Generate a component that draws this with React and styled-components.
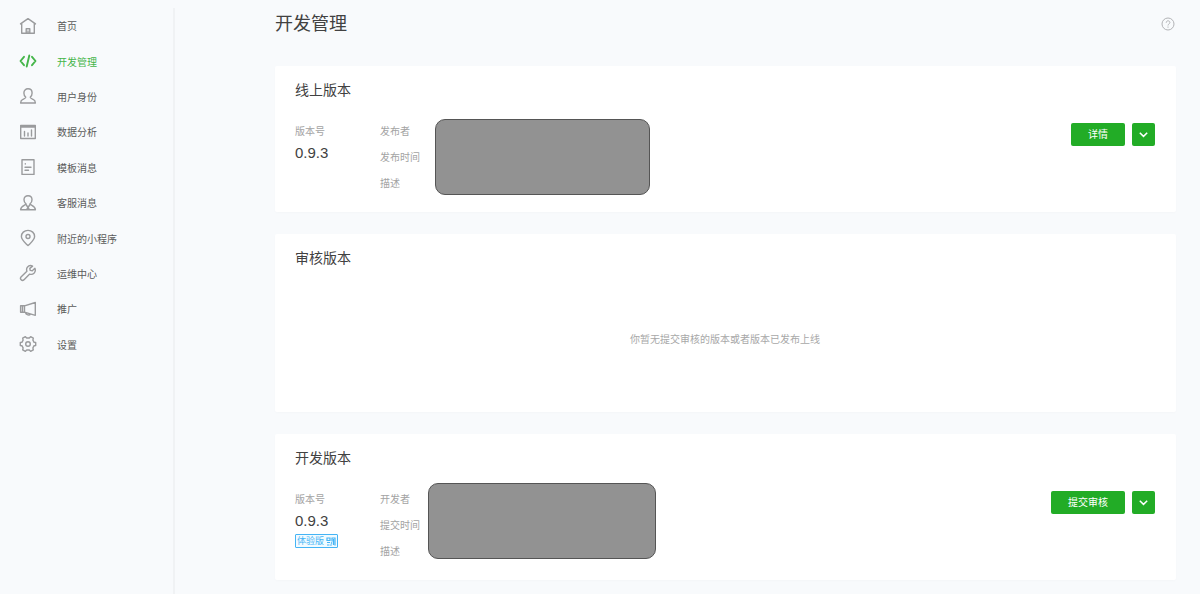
import React from "react"
import styled, { createGlobalStyle, css } from "styled-components"

const GlobalStyle = createGlobalStyle`
  * {
    box-sizing: border-box;
  }
  body {
    margin: 0;
    background: #f8fafc;
    color: #414141;
    font-family: "Liberation Sans", "Noto Sans CJK SC", sans-serif;
    font-size: 10px;
  }
  h1, h2, p, ul {
    margin: 0;
    padding: 0;
    font-weight: 400;
  }
`

const Page = styled.div`
  display: flex;
  min-height: 100vh;
`

const Sidebar = styled.nav`
  display: flex;
  flex: none;
  width: 175px;
  padding-top: 8px;
`

const Menu = styled.ul`
  display: grid;
  grid-template-rows: repeat(10, 1fr);
  flex: 1;
  height: 354px;
  list-style: none;
`

const Divider = styled.div`
  width: 2px;
  background: #f0f2f4;
`

const MenuLink = styled.a`
  display: flex;
  align-items: center;
  gap: 20px;
  height: 100%;
  padding-left: 19px;
  color: ${props => (props.$active ? "#44b549" : "#5a5a5a")};
  text-decoration: none;
  svg {
    flex: none;
    color: ${props => (props.$active ? "#44b549" : "#9a9b9d")};
  }
`

const Main = styled.main`
  flex: 1;
  min-width: 0;
  padding: 9px 24px 14px 100px;
`

const Header = styled.header`
  display: flex;
  align-items: center;
  justify-content: space-between;
  height: 30px;
  margin-bottom: 27px;
`

const Title = styled.h1`
  font-size: 18px;
  line-height: 30px;
`

const iconButton = css`
  display: flex;
  align-items: center;
  justify-content: center;
  padding: 0;
  border: 0;
  cursor: pointer;
`

const Help = styled.button`
  ${iconButton};
  width: 16px;
  height: 16px;
  background: none;
  color: #b2b3b6;
`

const Cards = styled.div`
  display: grid;
  gap: 22px;
`

const Card = styled.section`
  display: flex;
  flex-direction: column;
  min-height: ${props => (props.$tall ? 178 : 146)}px;
  padding: 13px 21px 15px 20px;
  border-radius: 2px;
  background: #fff;
  box-shadow: 0 1px 3px rgba(0, 0, 0, 0.02);
`

const CardTitle = styled.h2`
  margin-bottom: 14px;
  font-size: 14px;
  line-height: 22px;
`

const Body = styled.div`
  display: flex;
  align-items: flex-start;
`

const Version = styled.div`
  width: 85px;
  padding-top: 4px;
`

const Label = styled.p`
  color: #a3a3a3;
  line-height: 26px;
`

const Number = styled.p`
  font-size: 15px;
  line-height: 15px;
`

const Tag = styled.a`
  display: inline-flex;
  align-items: center;
  gap: 2px;
  height: 14px;
  margin-top: 6px;
  padding: 0 1px;
  border: 1px solid #45b4f5;
  border-radius: 1px;
  background: #f2fbff;
  color: #45b4f5;
  font-size: 9px;
  line-height: 12px;
  text-decoration: none;
`

const Details = styled.div`
  padding-top: 4px;
`

// covers private values
const Mask = styled.div`
  width: ${props => props.$width}px;
  height: 76px;
  margin-top: ${props => props.$top}px;
  margin-left: ${props => props.$left}px;
  border: 1px solid #555;
  border-radius: 10px;
  background: #929292;
`

const Actions = styled.div`
  display: flex;
  gap: 7px;
  margin-left: auto;
  padding-top: 8px;
`

const Button = styled.button`
  height: 23px;
  padding: 0 17px;
  border: 0;
  border-radius: 2px;
  background: #22ac26;
  color: #fff;
  font: inherit;
  line-height: 23px;
  cursor: pointer;
`

const More = styled.button`
  ${iconButton};
  width: 23px;
  height: 23px;
  border-radius: 2px;
  background: #22ac26;
  color: #fff;
`

const Empty = styled.p`
  margin: auto;
  color: #a8a8a8;
  line-height: 16px;
`

const Icon = ({ children, width = 1.4 }) => (
  <svg
    width="18"
    height="18"
    viewBox="0 0 18 18"
    fill="none"
    stroke="currentColor"
    strokeWidth={width}
    strokeLinejoin="round"
    strokeLinecap="round"
    aria-hidden="true"
  >
    {children}
  </svg>
)

const HomeIcon = () => (
  <Icon>
    <path d="M1.500 6.900 9 1.600l7.500 5.300M2.700 6.300v10h12.600v-10M7.200 16.300v-4.500h3.600v4.500M9 14v2" />
  </Icon>
)

const CodeIcon = () => (
  <Icon width={1.9}>
    <path d="M5 4.800 1.500 9 5 13.200M13 4.800 16.500 9 13 13.200M10.300 3.500 7.700 14.500" />
  </Icon>
)

const UserIcon = () => (
  <Icon>
    <path d="M6.800 10.200C5.500 9.200 4.900 7.600 4.900 5.900 4.900 3.400 6.600 1.800 9 1.800s4.100 1.600 4.100 4.100c0 1.700-.6 3.300-1.900 4.300.3 1.300 1.400 1.500 2.900 2.100 1.600.6 2.200 1.800 2.300 3.700H1.600c.1-1.900.7-3.100 2.300-3.700 1.500-.6 2.600-.8 2.900-2.100Z" />
  </Icon>
)

const ChartIcon = () => (
  <Icon>
    <path d="M1.700 2.500h14.600v13H1.700zM1.700 4h14.600M5.500 8.500V13M9 10v3M12.500 7v6" />
  </Icon>
)

const TemplateIcon = () => (
  <Icon>
    <path d="M3 1.800h12v14.600H3zM6.300 5.700v.3M6 9.200h6M6 12.200h3.500" />
  </Icon>
)

const ServiceIcon = () => (
  <Icon>
    <path d="M7 9.900C5.600 8.800 5 7.400 5 5.700 5 3.300 6.700 1.700 9 1.700s4 1.600 4 4c0 1.700-.6 3.100-2 4.200.8 1.600 5.200 1.900 5.400 5.900H1.600c.2-4 4.600-4.300 5.400-5.900ZM7 10.500l2 3 2-3M9 13.500l-1.500 2.300M9 13.500l1.500 2.300" />
  </Icon>
)

const PinIcon = () => (
  <Icon>
    <path d="M9 16.600C5.300 13 2.400 10.800 2.400 7.500 2.400 4 5.200 1.400 9 1.400s6.600 2.600 6.600 6.100c0 3.300-2.900 5.500-6.600 9.100Z" />
    <circle cx="9" cy="7.500" r="2" />
  </Icon>
)

const WrenchIcon = () => (
  <Icon>
    <path d="M13.600 2.100c-1.900-.9-4-.4-5.200 1.100-.9 1.200-1 2.600-.5 4L2 13c-1.600 1.800 1 4.400 2.800 2.900l5.900-5.800c1.500.5 3.100.2 4.300-.9 1.300-1.300 1.600-3.200.9-4.900l-2.600 2.400-2.100-.3-.4-2Z" />
  </Icon>
)

const HornIcon = () => (
  <Icon>
    <path d="M5.500 5.800 16.300 2.500v12.800L5.500 12.200ZM5.500 5.800H1.600v6.400h3.900M3.500 6v6M6.500 12.700c.3 2.300 4.100 3 4.800 1.400" />
  </Icon>
)

const GearIcon = () => (
  <Icon>
    <path d="m6.400 1.700 1.300 1.300h2.600l1.300-1.300 2.700 1.500-.4 1.900 1.200 2.200 1.600.2v3l-1.600.2-1.200 2.200.4 1.900-2.700 1.500-1.300-1.300H7.700l-1.300 1.300-2.700-1.500.4-1.900-1.200-2.200-1.600-.2v-3l1.600-.2 1.200-2.200-.4-1.900Z" />
    <circle cx="9" cy="9" r="2.300" />
  </Icon>
)

const HelpIcon = () => (
  <svg width="14" height="14" viewBox="0 0 14 14" fill="none" stroke="currentColor" aria-hidden="true">
    <circle cx="7" cy="7" r="6" />
    <path d="M5.200 5.700c0-2.500 3.700-2.400 3.700-.2C8.900 6.900 7 6.900 7 8.500M7 9.500v1.200" />
  </svg>
)

const ChevronIcon = () => (
  <svg width="11" height="11" viewBox="0 0 11 11" fill="none" stroke="currentColor" strokeWidth="1.500" aria-hidden="true">
    <path d="m1.800 3.700 3.700 3.700 3.700-3.700" />
  </svg>
)

const CodeMark = () => (
  <svg width="10" height="9" viewBox="0 0 10 9" fill="none" stroke="currentColor" strokeWidth="1.200" aria-hidden="true">
    <path d="M1 1h3v2.500H1zM1 5.500h3M1 8h2.500M6 1v3.500M5.500 1H9v7.500M7.500 2v6M5 6.500l1-1M4.500 8.500l1-1" />
  </svg>
)

const menu = [
  { text: "首页", icon: HomeIcon },
  { text: "开发管理", icon: CodeIcon, active: true },
  { text: "用户身份", icon: UserIcon },
  { text: "数据分析", icon: ChartIcon },
  { text: "模板消息", icon: TemplateIcon },
  { text: "客服消息", icon: ServiceIcon },
  { text: "附近的小程序", icon: PinIcon },
  { text: "运维中心", icon: WrenchIcon },
  { text: "推广", icon: HornIcon },
  { text: "设置", icon: GearIcon },
]

const VersionCard = ({ title, labels, mask, action, trial }) => (
  <Card>
    <CardTitle>{title}</CardTitle>
    <Body>
      <Version>
        <Label>版本号</Label>
        <Number>0.9.3</Number>
        {trial && (
          <Tag href="#trial">
            体验版
            <CodeMark />
          </Tag>
        )}
      </Version>
      <Details>
        {labels.map(label => (
          <Label key={label}>{label}</Label>
        ))}
      </Details>
      <Mask $width={mask.width} $top={mask.top} $left={mask.left} />
      <Actions>
        <Button type="button">{action}</Button>
        <More type="button" aria-label="更多">
          <ChevronIcon />
        </More>
      </Actions>
    </Body>
  </Card>
)

export default function App() {
  return (
    <>
      <GlobalStyle />
      <Page>
        <Sidebar>
          <Menu>
            {menu.map(({ text, icon: ItemIcon, active }) => (
              <li key={text}>
                <MenuLink href="#menu" $active={active}>
                  <ItemIcon />
                  {text}
                </MenuLink>
              </li>
            ))}
          </Menu>
          <Divider />
        </Sidebar>
        <Main>
          <Header>
            <Title>开发管理</Title>
            <Help type="button" aria-label="帮助">
              <HelpIcon />
            </Help>
          </Header>
          <Cards>
            <VersionCard
              title="线上版本"
              labels={["发布者", "发布时间", "描述"]}
              mask={{ width: 215, top: 4, left: 15 }}
              action="详情"
            />
            <Card $tall>
              <CardTitle>审核版本</CardTitle>
              <Empty>你暂无提交审核的版本或者版本已发布上线</Empty>
            </Card>
            <VersionCard
              title="开发版本"
              labels={["开发者", "提交时间", "描述"]}
              mask={{ width: 228, top: 0, left: 8 }}
              action="提交审核"
              trial
            />
          </Cards>
        </Main>
      </Page>
    </>
  )
}
